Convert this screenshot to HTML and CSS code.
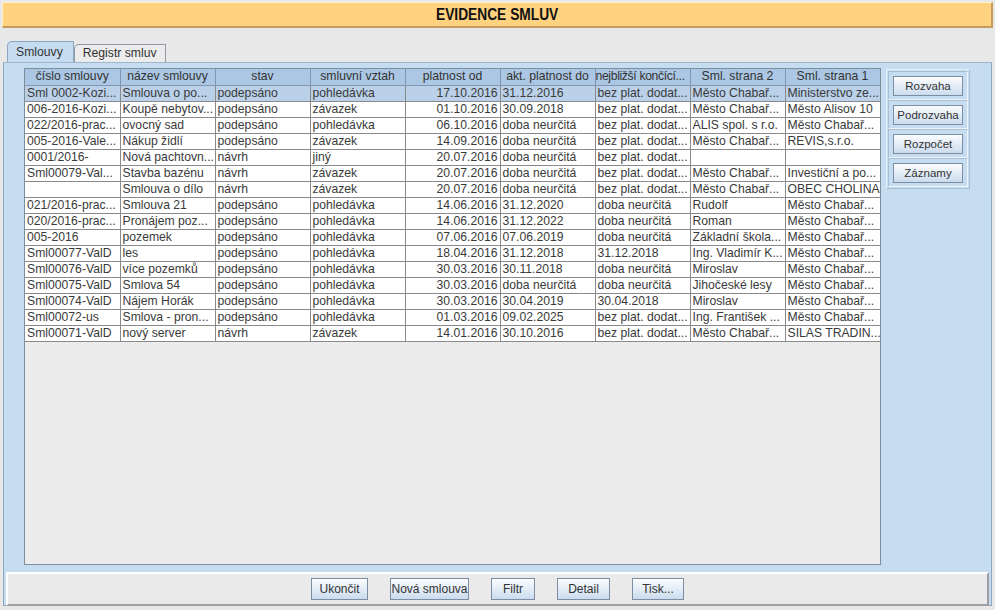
FILE: index.html
```html
<!DOCTYPE html>
<html lang="cs">
<head>
<meta charset="utf-8">
<title>Evidence smluv</title>
<link rel="stylesheet" href="styles.css">
</head>
<body>
<div class="title"><span class="title-text">EVIDENCE SMLUV</span></div>
<div class="tabs">
  <div class="tab active">Smlouvy</div>
  <div class="tab">Registr smluv</div>
</div>
<div class="panel">
  <div class="main">
    <div class="pane">
      <table class="grid">
        <colgroup><col><col><col><col><col><col><col><col><col></colgroup>
        <thead>
          <tr><th>číslo smlouvy</th><th>název smlouvy</th><th>stav</th><th>smluvní vztah</th><th>platnost od</th><th>akt. platnost do</th><th class="tight">nejbližší končící...</th><th>Sml. strana 2</th><th>Sml. strana 1</th></tr>
        </thead>
        <tbody>
          <tr class="sel"><td>Sml 0002-Kozi...</td><td>Smlouva o po...</td><td>podepsáno</td><td>pohledávka</td><td class="r">17.10.2016</td><td>31.12.2016</td><td>bez plat. dodat...</td><td>Město Chabař...</td><td>Ministerstvo ze...</td></tr>
          <tr><td>006-2016-Kozi...</td><td>Koupě nebytov...</td><td>podepsáno</td><td>závazek</td><td class="r">01.10.2016</td><td>30.09.2018</td><td>bez plat. dodat...</td><td>Město Chabař...</td><td>Město Alisov 10</td></tr>
          <tr><td>022/2016-prac...</td><td>ovocný sad</td><td>podepsáno</td><td>pohledávka</td><td class="r">06.10.2016</td><td>doba neurčitá</td><td>bez plat. dodat...</td><td>ALIS spol. s r.o.</td><td>Město Chabař...</td></tr>
          <tr><td>005-2016-Vale...</td><td>Nákup židlí</td><td>podepsáno</td><td>závazek</td><td class="r">14.09.2016</td><td>doba neurčitá</td><td>bez plat. dodat...</td><td>Město Chabař...</td><td>REVIS,s.r.o.</td></tr>
          <tr><td>0001/2016-</td><td>Nová pachtovn...</td><td>návrh</td><td>jiný</td><td class="r">20.07.2016</td><td>doba neurčitá</td><td>bez plat. dodat...</td><td></td><td></td></tr>
          <tr><td>Sml00079-Val...</td><td>Stavba bazénu</td><td>návrh</td><td>závazek</td><td class="r">20.07.2016</td><td>doba neurčitá</td><td>bez plat. dodat...</td><td>Město Chabař...</td><td>Investiční a po...</td></tr>
          <tr><td></td><td>Smlouva o dílo</td><td>návrh</td><td>závazek</td><td class="r">20.07.2016</td><td>doba neurčitá</td><td>bez plat. dodat...</td><td>Město Chabař...</td><td>OBEC CHOLINA</td></tr>
          <tr><td>021/2016-prac...</td><td>Smlouva 21</td><td>podepsáno</td><td>pohledávka</td><td class="r">14.06.2016</td><td>31.12.2020</td><td>doba neurčitá</td><td>Rudolf</td><td>Město Chabař...</td></tr>
          <tr><td>020/2016-prac...</td><td>Pronájem poz...</td><td>podepsáno</td><td>pohledávka</td><td class="r">14.06.2016</td><td>31.12.2022</td><td>doba neurčitá</td><td>Roman</td><td>Město Chabař...</td></tr>
          <tr><td>005-2016</td><td>pozemek</td><td>podepsáno</td><td>pohledávka</td><td class="r">07.06.2016</td><td>07.06.2019</td><td>doba neurčitá</td><td>Základní škola...</td><td>Město Chabař...</td></tr>
          <tr><td>Sml00077-ValD</td><td>les</td><td>podepsáno</td><td>pohledávka</td><td class="r">18.04.2016</td><td>31.12.2018</td><td>31.12.2018</td><td>Ing. Vladimír K...</td><td>Město Chabař...</td></tr>
          <tr><td>Sml00076-ValD</td><td>více pozemků</td><td>podepsáno</td><td>pohledávka</td><td class="r">30.03.2016</td><td>30.11.2018</td><td>doba neurčitá</td><td>Miroslav</td><td>Město Chabař...</td></tr>
          <tr><td>Sml00075-ValD</td><td>Smlova 54</td><td>podepsáno</td><td>pohledávka</td><td class="r">30.03.2016</td><td>doba neurčitá</td><td>doba neurčitá</td><td>Jihočeské lesy</td><td>Město Chabař...</td></tr>
          <tr><td>Sml00074-ValD</td><td>Nájem Horák</td><td>podepsáno</td><td>pohledávka</td><td class="r">30.03.2016</td><td>30.04.2019</td><td>30.04.2018</td><td>Miroslav</td><td>Město Chabař...</td></tr>
          <tr><td>Sml00072-us</td><td>Smlova - pron...</td><td>podepsáno</td><td>pohledávka</td><td class="r">01.03.2016</td><td>09.02.2025</td><td>bez plat. dodat...</td><td>Ing. František ...</td><td>Město Chabař...</td></tr>
          <tr><td>Sml00071-ValD</td><td>nový server</td><td>návrh</td><td>závazek</td><td class="r">14.01.2016</td><td>30.10.2016</td><td>bez plat. dodat...</td><td>Město Chabař...</td><td>SILAS TRADIN...</td></tr>
        </tbody>
      </table>
    </div>
    <div class="side">
      <div class="side-cell"><button class="btn side-btn">Rozvaha</button></div>
      <div class="side-cell"><button class="btn side-btn">Podrozvaha</button></div>
      <div class="side-cell"><button class="btn side-btn">Rozpočet</button></div>
      <div class="side-cell"><button class="btn side-btn">Záznamy</button></div>
    </div>
  </div>
  <div class="bottom">
    <button class="btn b-ukoncit">Ukončit</button>
    <button class="btn b-nova">Nová smlouva</button>
    <button class="btn b-filtr">Filtr</button>
    <button class="btn b-detail">Detail</button>
    <button class="btn b-tisk">Tisk...</button>
  </div>
</div>
</body>
</html>
```
FILE: styles.css
```css
* { box-sizing: border-box; }
html, body { margin: 0; padding: 0; }
body {
  width: 995px;
  height: 610px;
  background: #e8e8e8;
  font-family: "Liberation Sans", Arial, sans-serif;
  font-size: 12.2px;
  color: #333;
  overflow: hidden;
}
.title {
  margin: 2px 2px 0 2px;
  height: 26px;
  background: #ffd27f;
  border-top: 1px solid #fff0c8;
  border-left: 1px solid #fff0c8;
  border-bottom: 2px solid #c39d5e;
  border-right: 2px solid #c39d5e;
  display: flex;
  align-items: center;
  justify-content: center;
}
.title-text {
  display: inline-block;
  font-weight: bold;
  font-size: 16px;
  color: #111;
  transform: scaleX(0.86);
}
.tabs {
  display: flex;
  align-items: flex-end;
  height: 21px;
  margin-top: 13px;
  padding-left: 7px;
}
.tab {
  height: 18px;
  padding: 0 8px 0 8px;
  line-height: 17px;
  background: #ececec;
  border: 1px solid #8f9aa5;
  border-bottom: none;
  border-radius: 5px 0 0 0;
  color: #333;
}
.tab.active {
  height: 21px;
  line-height: 20px;
  background: #c5dbf0;
  border-color: #8da6bf;
  padding: 0 10px 0 8px;
}
.panel {
  margin: 0 3px 0 3px;
  height: 544px;
  background: #c6dcf1;
  border: 1px solid #8ea7bf;
  border-top-color: #9fb6cc;
}
.main {
  display: flex;
  align-items: flex-start;
  padding: 5px 0 0 20px;
  height: 505px;
}
.pane {
  width: 857px;
  height: 497px;
  background: #ececec;
  border: 1px solid #7d8d9c;
  overflow: hidden;
}
.grid {
  width: 855px;
  table-layout: fixed;
  border-collapse: collapse;
}
.grid col { width: 95px; }
.grid th {
  height: 16px;
  padding: 0 1px;
  background: #abc7e3;
  color: #333;
  font-weight: normal;
  text-align: center;
  border-right: 1px solid #7f97b0;
  border-bottom: 1px solid #7f97b0;
  white-space: nowrap;
  overflow: hidden;
  line-height: 15px;
}
.grid th.tight {
  padding: 0;
  letter-spacing: -0.35px;
  text-align: left;
}
.grid td {
  height: 16px;
  padding: 0 1px 0 2px;
  background: #fff;
  border-right: 1px solid #8a8a8a;
  border-bottom: 1px solid #8a8a8a;
  white-space: nowrap;
  overflow: hidden;
  line-height: 15px;
  color: #3a3a3a;
}
.grid tr.sel td { background: #bad1e9; }
.grid td.r { text-align: right; padding: 0 2px 0 1px; }
.side {
  margin-left: 5px;
  margin-top: 1px;
  width: 84px;
  padding: 1px;
  border: 1px solid #e9f1f9;
  border-right-color: #a9bfd4;
  border-bottom-color: #a9bfd4;
}
.side-cell {
  height: 29px;
  display: flex;
  align-items: center;
  justify-content: center;
  border: 1px solid #a9bfd4;
  border-right-color: #eef4fa;
  border-bottom-color: #eef4fa;
}
.btn {
  font-family: "Liberation Sans", Arial, sans-serif;
  font-size: 12px;
  color: #333;
  height: 22px;
  padding: 0;
  border: 1px solid #7b8ea4;
  background: linear-gradient(#fbfdff, #e6eef7 45%, #cbdcee);
  cursor: default;
}
.side-btn {
  width: 70px;
  height: 20px;
  font-size: 11.5px;
}
.bottom {
  margin: 4px 2px 0 2px;
  height: 34px;
  background: #eaeaea;
  border-top: 2px solid #ffffff;
  border-left: 2px solid #ffffff;
  border-right: 2px solid #9c9fa3;
  border-bottom: 2px solid #9c9fa3;
  display: flex;
  align-items: flex-start;
  justify-content: center;
  gap: 22px;
  padding-top: 4px;
}
.b-ukoncit { width: 57px; }
.b-nova { width: 79px; }
.b-filtr { width: 44px; }
.b-detail { width: 53px; }
.b-tisk { width: 52px; }
```
